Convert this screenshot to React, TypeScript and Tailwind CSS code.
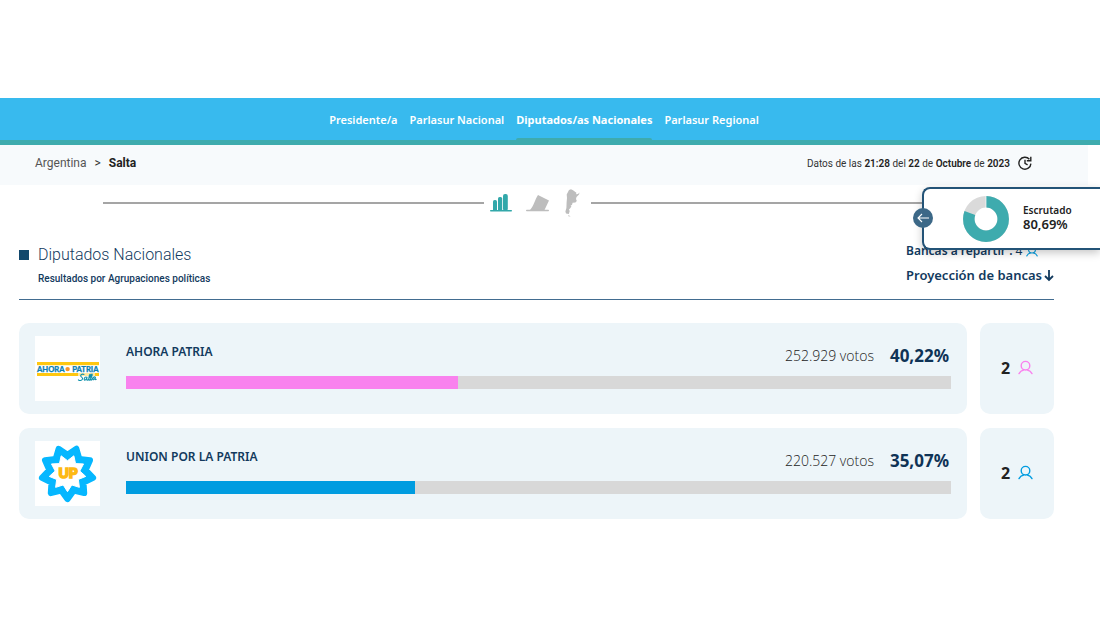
import React from "react";

type Party = {
  name: string;
  votes: string;
  percent: string;
  share: number;
  seats: number;
  color: string;
  logo: React.ReactNode;
};

function PersonIcon({ color, className }: { color: string; className: string }) {
  return (
    <svg viewBox="0 0 15 15" className={className} fill="none" stroke={color} strokeWidth="1.4" strokeLinecap="round" aria-hidden="true">
      <circle cx="7.5" cy="5.7" r="4.3" />
      <path d="M1 13.6C2 11.6 3.8 10.4 5.6 10M14 13.6C13 11.6 11.2 10.4 9.4 10" />
    </svg>
  );
}

function AhoraLogo() {
  return (
    <svg viewBox="0 0 65 65" className="block size-full" role="img" aria-label="Ahora Patria Salta">
      <rect x="2" y="26" width="62" height="3.2" fill="#ffc710" />
      <rect x="2" y="37" width="62" height="3" fill="#ffc710" />
      <g fontFamily="Lato, sans-serif" fontWeight="900" fontSize="7.6" fill="#0b80b4" stroke="#0b80b4" strokeWidth=".25">
        <text x="2" y="35.9">AHORA</text>
        <text x="63.5" y="35.9" textAnchor="end">PATRIA</text>
      </g>
      <circle cx="32.6" cy="33.1" r="2.2" fill="#f7942b" />
      <rect x="43" y="37" width="17" height="3" fill="#fff" opacity="0.6" />
      <g fill="none" stroke="#1191ab" strokeWidth="1.1" strokeLinecap="round" strokeLinejoin="round">
        <path d="M49 38.4C47 37.6 45.2 38.8 45.8 40.2C46.4 41.3 48.4 41.6 47.4 43.3C46.6 44.8 44.4 44.9 43.4 43.8" />
        <path d="M52 41.4C50.4 40.2 49 42 49.2 43.6C49.6 45 51.4 43.6 52 41.4C51.4 43.8 52 45 53.2 43.6C55 41.4 56 38.4 55.2 38.2C54.2 38 53.2 44.6 54.4 44.3C56.2 43.2 57.8 38.3 57 38C56 38 55 44.4 56.2 44.2C57 44 57.6 42.6 58 41.8" />
        <path d="M60.4 41.2C58.8 40.2 57.6 42 57.9 43.4C58.4 44.5 59.8 43 60.4 41.2C60 43.2 60.2 44.2 61.2 43.4" />
      </g>
    </svg>
  );
}

function starPoints(cx: number, cy: number, outer: number, inner: number) {
  return Array.from({ length: 18 }, (_, i) => {
    const radius = i % 2 === 0 ? outer : inner;
    const angle = Math.PI / 2 + (i * Math.PI) / 9;
    return `${(cx + radius * Math.cos(angle)).toFixed(2)},${(cy + radius * Math.sin(angle)).toFixed(2)}`;
  }).join(" ");
}

function UnionLogo() {
  return (
    <svg viewBox="0 0 65 65" className="block size-full" role="img" aria-label="Unión por la Patria">
      <polygon points={starPoints(32.5, 32.2, 26, 18.5)} fill="#05b7ff" stroke="#05b7ff" strokeWidth="6" strokeLinejoin="round" />
      <polygon points={starPoints(32.5, 32.2, 18.5, 12.5)} fill="#fff" stroke="#fff" strokeWidth="1" strokeLinejoin="round" />
      <text x="33" y="37.2" textAnchor="middle" fontFamily="Lato, sans-serif" fontWeight="900" fontSize="14" fill="#fdb913" stroke="#fdb913" strokeWidth="1.6">
        UP
      </text>
    </svg>
  );
}

const parties: Party[] = [
  { name: "AHORA PATRIA", votes: "252.929 votos", percent: "40,22%", share: 40.22, seats: 2, color: "#f982ee", logo: <AhoraLogo /> },
  { name: "UNION POR LA PATRIA", votes: "220.527 votos", percent: "35,07%", share: 35.07, seats: 2, color: "#009ce0", logo: <UnionLogo /> },
];

const tabs = ["Presidente/a", "Parlasur Nacional", "Diputados/as Nacionales", "Parlasur Regional"];

function Navigation() {
  return (
    <nav className="flex h-[47px] justify-center gap-3 border-b-5 border-[#3eabae] bg-[#38baee] pr-3 text-[11px] font-semibold text-white">
      {tabs.map((tab, index) => (
        <a
          key={tab}
          href="#"
          aria-current={index === 2 ? "page" : undefined}
          className={
            index === 2
              ? "flex flex-col justify-between font-bold after:h-0.5 after:rounded-t after:bg-[#3eabae]"
              : "flex flex-col"
          }
        >
          <span className="pt-3.5 leading-4">{tab}</span>
        </a>
      ))}
    </nav>
  );
}

function Breadcrumb() {
  return (
    <div className="mr-3 flex h-10 items-center justify-between bg-[#f7fafc] pr-14 pb-1 pl-[35px] font-['Roboto',sans-serif] text-[#333]">
      <div className="flex gap-2 text-[12px]">
        <a href="#" className="text-[#555]">Argentina</a>
        <span>&gt;</span>
        <span className="font-bold text-[#222]">Salta</span>
      </div>
      <div className="flex items-center gap-2 text-[10px]">
        <p>
          Datos de las <b className="font-semibold text-[#222]">21:28</b> del <b className="font-semibold text-[#222]">22</b> de{" "}
          <b className="font-semibold text-[#222]">Octubre</b> de <b className="font-semibold text-[#222]">2023</b>
        </p>
        <button type="button" aria-label="Actualizar">
          <svg viewBox="0 0 14 14" className="block size-3.5" fill="none" stroke="#222" strokeWidth="1.4" aria-hidden="true">
            <path d="M11.4 3.2A6 6 0 1 0 12.9 7.6M12.8 .8V4.8H8.8M7 3.8V7.4L9.6 8.8" />
          </svg>
        </button>
      </div>
    </div>
  );
}

function ViewSwitcher() {
  return (
    <div className="mr-12 ml-[103px] flex h-9 items-center">
      <div className="h-0.5 flex-[381] bg-[#a5a5a5]" />
      <div className="flex items-center gap-3.5 pr-2.5 pl-1.5">
        <button type="button" aria-label="Gráfico de barras">
          <svg viewBox="0 0 22 18" className="block h-[18px] w-[22px]" fill="#32a8aa" aria-hidden="true">
            <rect x="3" y="6" width="4" height="11" rx="1.6" />
            <rect x="8" y="3" width="4.2" height="14" rx="1.6" />
            <rect x="13" y="0" width="4.8" height="17" rx="2" />
            <rect x="0" y="16" width="22" height="1.5" rx=".7" />
          </svg>
        </button>
        <button type="button" aria-label="Urna">
          <svg viewBox="0 0 24 18" className="block h-[18px] w-6" fill="#bdbdbd" aria-hidden="true">
            <path d="M4 16C8 12 9 5 12 1L23 6.5L18.5 16Z" />
            <rect x="0" y="15.8" width="23" height="1.5" rx=".7" />
          </svg>
        </button>
        <button type="button" aria-label="Mapa">
          <svg viewBox="0 0 17 28" className="block h-7 w-[17px]" fill="#bdbdbd" aria-hidden="true">
            <path d="M5 1L7 .3L9 1.2L12.4 3.8L12 5.3L14 5L15.5 3.4L15 5.6L12.5 8L12 10L12.8 12L11.4 13.4L8.6 13.8L8 16L6.6 16.4L7.4 17.6L6 19.4L4.9 20.4L5.7 22L4.8 25L2 24.6L1.4 22.4L2.4 19L2.6 13.5L3 9L2.7 5.4ZM4.5 26L6.7 27.4L4.3 27.3Z" />
          </svg>
        </button>
      </div>
      <div className="h-0.5 flex-[462] bg-[#a5a5a5]" />
    </div>
  );
}

function CountPanel() {
  return (
    <aside className="absolute top-[89px] right-0 flex h-[63px] w-[178px] items-center rounded-l-lg border-2 border-r-0 border-[#235377] bg-white pl-[39px] shadow-[0_3px_8px_rgba(0,0,0,0.22)]">
      <button type="button" aria-label="Abrir panel" className="absolute top-[19px] -left-[11px] flex size-5 items-center justify-center rounded-full bg-[#3c6887]">
        <svg viewBox="0 0 12 10" className="h-2.5 w-3" fill="none" stroke="#fff" strokeWidth="1.1" aria-hidden="true">
          <path d="M12 5H1M5 1L1 5L5 9" />
        </svg>
      </button>
      <svg viewBox="0 0 46 46" className="size-[46px] shrink-0" fill="none" strokeWidth="11.5" aria-hidden="true">
        <circle cx="23" cy="23" r="17.2" stroke="#dadada" />
        <circle cx="23" cy="23" r="17.2" stroke="#3eabae" pathLength="100" strokeDasharray="80.69 100" transform="rotate(-90 23 23)" />
        <path d="M23 0V12" stroke="#fff" strokeWidth=".7" />
      </svg>
      <p className="flex flex-col pb-1 pl-3.5 font-semibold text-[#222]">
        <span className="text-[10px] leading-3.5">Escrutado</span>
        <span className="text-[13px] leading-3.5">80,69%</span>
      </p>
    </aside>
  );
}

function PartyRow({ party }: { party: Party }) {
  return (
    <li className="flex h-[91px] gap-[13px]">
      <article className="flex flex-1 items-start rounded-[10px] bg-[#edf5f9] pt-[13px] pr-4 pl-4">
        <div className="size-[65px] shrink-0 bg-white">{party.logo}</div>
        <div className="flex-1 pl-[26px]">
          <div className="flex h-10 items-start justify-between">
            <h2 className="pt-2 text-[12px] leading-4 font-semibold text-[#123a5e]">{party.name}</h2>
            <p className="flex items-center gap-4 pt-2 pr-0.5 leading-6">
              <span className="font-['Open_Sans',sans-serif] text-[14px] font-light text-[#222]">{party.votes}</span>
              <span className="text-[17px] font-bold text-[#0f3356]">{party.percent}</span>
            </p>
          </div>
          <div className="h-[13px] bg-[#d8d8d8]">
            <div className="h-full" style={{ width: `${party.share}%`, backgroundColor: party.color }} />
          </div>
        </div>
      </article>
      <div className="flex w-[74px] items-center justify-center gap-2 rounded-[10px] bg-[#edf5f9] pb-0.5">
        <span className="text-[16px] leading-5 font-bold text-[#222]">{party.seats}</span>
        <PersonIcon color={party.color} className="size-[15px]" />
      </div>
    </li>
  );
}

export default function App() {
  return (
    <div className="min-h-screen bg-white pt-[98px] font-['Noto_Sans',sans-serif]">
      <div className="relative">
        <Navigation />
        <Breadcrumb />
        <ViewSwitcher />
        <main className="mr-[46px] ml-[19px]">
          <header className="flex justify-between border-b border-[#426c90] pt-5 pb-2 text-[#123a5e]">
            <div>
              <h1 className="flex h-7 items-center gap-[9px] font-['Roboto',sans-serif] text-[16px] font-light">
                <span className="size-2.5 bg-[#12486c]" />
                Diputados Nacionales
              </h1>
              <p className="pl-[19px] font-['Roboto',sans-serif] text-[10px] leading-5 font-medium">Resultados por Agrupaciones políticas</p>
            </div>
            <div className="font-semibold">
              <p className="flex h-5 items-center gap-1 text-[12px]">
                <span>
                  Bancas a repartir : <span className="font-normal">4</span>
                </span>
                <PersonIcon color="#009ce0" className="size-3" />
              </p>
              <p className="flex h-[30px] items-center gap-0.5 text-[13px]">
                Proyección de bancas
                <svg viewBox="0 0 10 12" className="h-3 w-2.5" fill="none" stroke="#123a5e" strokeWidth="1.8" aria-hidden="true">
                  <path d="M5 0V10M1 6L5 10L9 6" />
                </svg>
              </p>
            </div>
          </header>
          <ul className="flex flex-col gap-3.5 pt-[23px]">
            {parties.map((party) => (
              <PartyRow key={party.name} party={party} />
            ))}
          </ul>
        </main>
        <CountPanel />
      </div>
    </div>
  );
}
